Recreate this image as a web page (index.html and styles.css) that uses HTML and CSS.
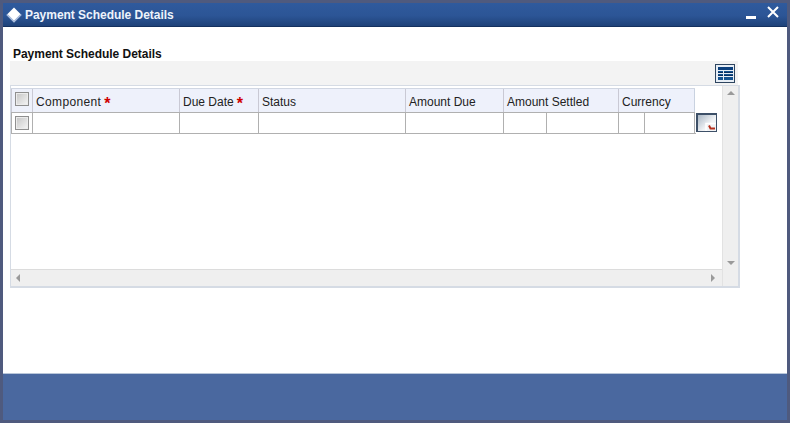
FILE: index.html
```html
<!DOCTYPE html>
<html lang="en">
<head>
<meta charset="utf-8">
<title>Payment Schedule Details</title>
<link rel="stylesheet" href="styles.css">
</head>
<body>
<div class="window">
  <header class="titlebar">
    <svg class="logo" width="16" height="16" viewBox="0 0 16 16"><path d="M8 0.5 15.5 8 8 15.5 0.5 8Z" fill="#fff"/><path d="M8 15.5 15.5 8 14.5 7 8 13.5 1.5 7 0.5 8Z" fill="#9fb4d8"/></svg>
    <span class="title">Payment Schedule Details</span>
    <svg class="min" width="10" height="4" viewBox="0 0 10 4"><rect width="10" height="3" y="1" fill="#fff"/></svg>
    <svg class="close" width="12" height="12" viewBox="0 0 12 12"><path d="M1 1 11 11M11 1 1 11" stroke="#fff" stroke-width="2" fill="none"/></svg>
  </header>
  <main class="content">
    <h1 class="heading">Payment Schedule Details</h1>
    <div class="toolbar">
      <button class="listbtn" type="button" aria-label="View">
        <svg width="15" height="13" viewBox="0 0 15 13"><path d="M0 0h15v3H0z" fill="#0b3f7c"/><path d="M0 4h5v2H0zM6 4h9v2H6zM0 7h5v2H0zM6 7h9v2H6zM0 10h5v3H0zM6 10h9v3H6z" fill="#14528f"/><path d="M0 5h5v1H0zM6 5h9v1H6zM0 8h5v1H0zM6 8h9v1H6z" fill="#0a2f5e"/></svg>
      </button>
    </div>
    <div class="gridbox">
      <div class="tablearea">
        <div class="row head">
          <div class="c c0"><span class="check"></span></div>
          <div class="c c1"><span class="wide">Component</span><span class="req">*</span></div>
          <div class="c c2">Due Date<span class="req">*</span></div>
          <div class="c c3">Status</div>
          <div class="c c4">Amount Due</div>
          <div class="c c5">Amount Settled</div>
          <div class="c c6">Currency</div>
        </div>
        <div class="row body">
          <div class="c c0"><span class="check"></span></div>
          <div class="c c1"></div>
          <div class="c c2"></div>
          <div class="c c3"></div>
          <div class="c c4"></div>
          <div class="c c5"><span class="sub s5"></span></div>
          <div class="c c6"><span class="sub s6"></span></div>
          <button class="detail" type="button" aria-label="Details">
            <svg width="18" height="16" viewBox="0 0 18 16"><path d="M8 16V8.500h10" stroke="#fff" stroke-width="1.500" fill="none"/><path d="M11 10.500l1.500 3h4.500" stroke="#b5321f" stroke-width="2" fill="none"/></svg>
          </button>
        </div>
      </div>
      <div class="vscroll"><span class="arrow up"></span><span class="arrow down"></span></div>
      <div class="hscroll"><span class="arrow left"></span><span class="arrow right"></span></div>
      <div class="corner"></div>
    </div>
  </main>
  <footer class="footer"></footer>
</div>
</body>
</html>
```
FILE: styles.css
```css
* { box-sizing: border-box; }
html, body { margin: 0; height: 100%; }
body { background: #4f5a7e; padding: 3px; overflow: hidden; font-family: "Liberation Sans", Arial, sans-serif; }
.window { height: 417px; width: 784px; display: flex; flex-direction: column; background: #fff; }
.titlebar { height: 24px; flex: none; display: flex; align-items: center; padding-left: 3px; background: linear-gradient(#2f5a9d, #2c5596 55%, #1e4279); border-bottom: 1px solid #14305f; color: #fff; }
.logo { flex: none; }
.title { margin-left: 3px; font-size: 12px; font-weight: bold; color: #eef3fb; letter-spacing: -0.03px; }
.min { margin-left: auto; margin-top: 5px; }
.close { margin: -5px 8px 0 11px; }
.content { flex: 1; padding: 20px 0 0 7px; }
.heading { margin: 0; font-size: 12px; line-height: 14px; font-weight: bold; color: #111; padding-left: 3px; height: 14px; letter-spacing: -0.03px; }
.toolbar { width: 728px; height: 24px; background: #f3f3f3; display: flex; justify-content: flex-end; align-items: center; padding-right: 3px; }
.listbtn { width: 20px; height: 19px; padding: 0; border: 1px solid #2e4560; background: #e6edf5; display: flex; align-items: center; justify-content: center; }
.gridbox { width: 730px; height: 203px; border: 2px solid #d5dbe4; border-left-width: 1px; border-top-width: 1px; display: grid; grid-template-columns: 1fr 16px; grid-template-rows: 1fr 17px; background: #fff; }
.tablearea { padding-top: 2px; }
.row { display: flex; position: relative; }
.head { height: 25px; border-top: 1px solid #d0d6e2; background: #eef1fb; width: 684px; border-bottom: 1px solid #b0b0b0; }
.body { height: 21px; border-bottom: 1px solid #b0b0b0; width: 685px; }
.c { flex: none; height: 100%; font-size: 12px; color: #222; padding-left: 3px; border-right: 1px solid #c9c9d4; display: flex; align-items: center; position: relative; }
.head .c { padding-top: 2px; }
.body .c { border-right-color: #b0b0b0; }
.c0 { width: 22px; border-left: 1px solid #c9c9d4; padding-left: 3px; }
.body .c0 { border-left-color: #b0b0b0; }
.c1 { width: 147px; }
.c2 { width: 79px; }
.c3 { width: 147px; }
.c4 { width: 98px; }
.c5 { width: 115px; }
.c6 { width: 76px; }
.head .c6 { border-right-color: #c9d2e0; }
.wide { letter-spacing: 0.35px; }
.sub { position: absolute; top: 0; bottom: 0; border-left: 1px solid #b0b0b0; }
.s5 { left: 42px; }
.s6 { left: 25px; }
.req { color: #d00000; font-weight: bold; font-size: 16px; margin-left: 3px; line-height: 12px; margin-top: 5px; }
.check { width: 14px; height: 14px; border: 1px solid #8f8f8f; background: linear-gradient(135deg, #c4c4c4, #f6f6f6); box-shadow: inset 0 0 0 1px #ececec; }
.head .check { margin-top: -5px; }
.detail { position: absolute; left: 685px; top: 0; width: 21px; height: 19px; padding: 0; border: 1px solid #3d5068; border-width: 2px 1px 1px 2px; background: linear-gradient(135deg, #a9b6c4, #f2f4f6 60%); display: flex; }
.detail svg { display: block; }
.vscroll, .hscroll, .corner { background: #efefef; position: relative; }
.vscroll { border-left: 1px solid #e2e2e2; display: flex; flex-direction: column; justify-content: space-between; align-items: center; padding: 5px 0 4px; }
.hscroll { border-top: 1px solid #dcdcdc; display: flex; justify-content: space-between; align-items: center; padding: 0 7px 0 5px; }
.corner { border-left: 1px solid #e2e2e2; }
.arrow { display: block; width: 0; height: 0; border: solid transparent; }
.up { border-width: 0 4px 4px; border-bottom-color: #9a9a9a; }
.down { border-width: 4px 4px 0; border-top-color: #9a9a9a; }
.left { border-width: 4px 4px 4px 0; border-right-color: #9a9a9a; }
.right { border-width: 4px 0 4px 4px; border-left-color: #9a9a9a; }
.footer { height: 47px; flex: none; background: #4a689f; border-top: 1px solid #b9c6d9; }
```
